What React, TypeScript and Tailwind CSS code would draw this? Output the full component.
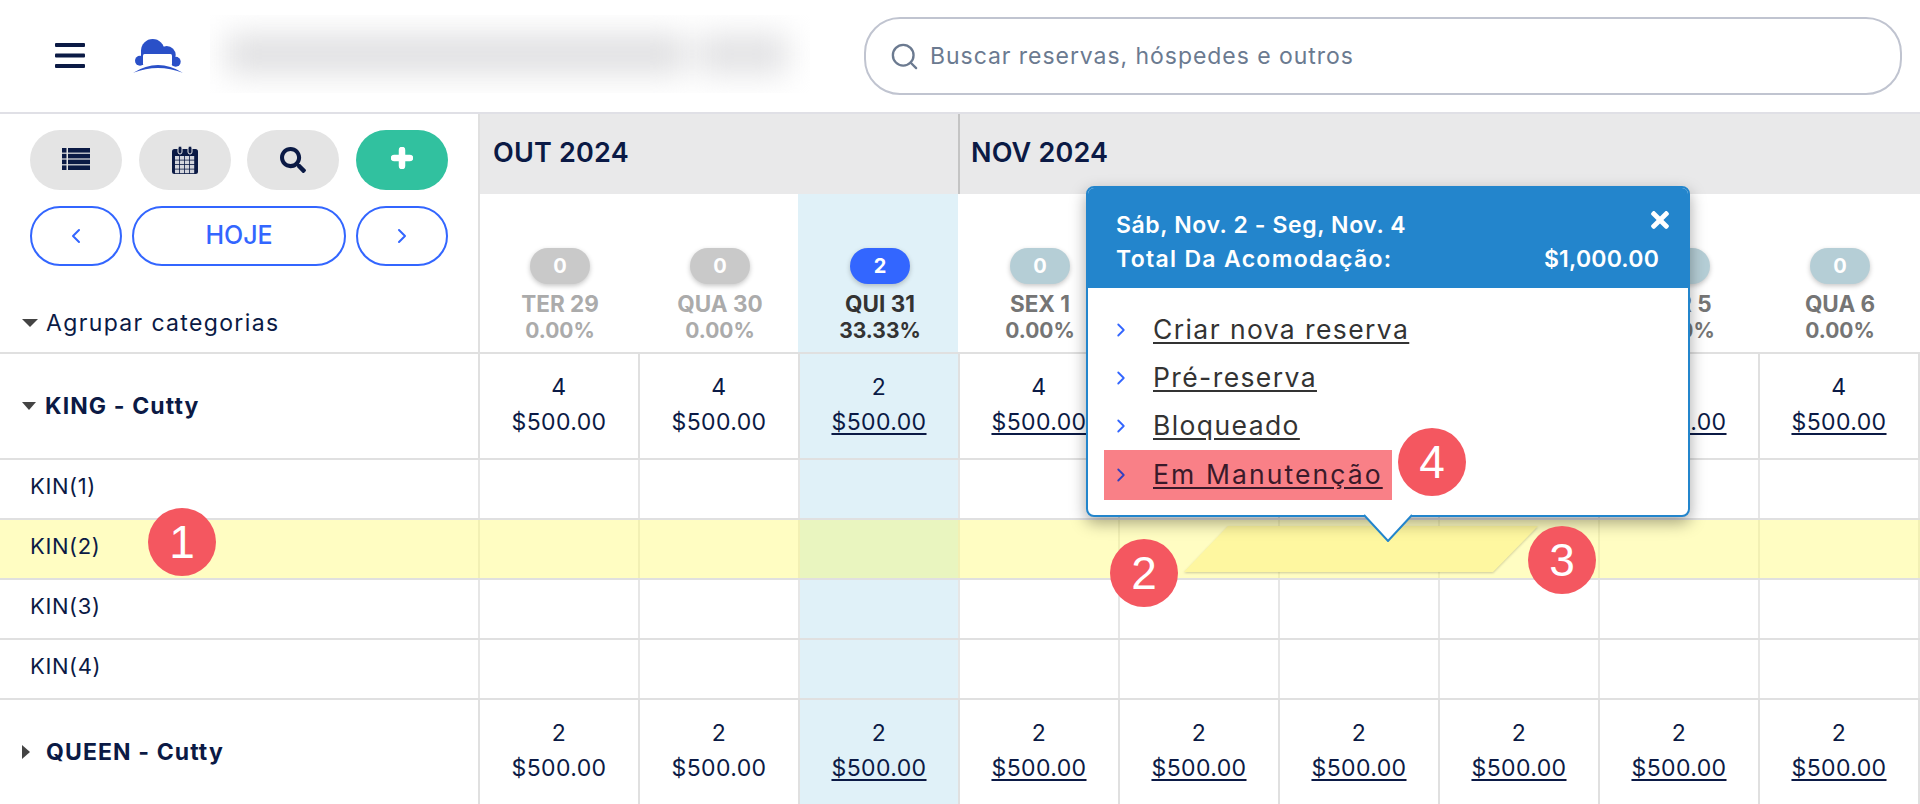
import { ChevronLeft, ChevronRight, Search } from "lucide-react";
import { FaSearch, FaTimes } from "react-icons/fa";

const days = [
  { label: "TER 29", pct: "0.00%", count: 0, kind: "past" },
  { label: "QUA 30", pct: "0.00%", count: 0, kind: "past" },
  { label: "QUI 31", pct: "33.33%", count: 2, kind: "today" },
  { label: "SEX 1", pct: "0.00%", count: 0, kind: "next" },
  { label: "SAB 2", pct: "0.00%", count: 0, kind: "hidden" },
  { label: "DOM 3", pct: "0.00%", count: 0, kind: "hidden" },
  { label: "SEG 4", pct: "0.00%", count: 0, kind: "hidden" },
  { label: "TER 5", pct: "0.00%", count: 0, kind: "next" },
  { label: "QUA 6", pct: "0.00%", count: 0, kind: "next" },
];

const kingCounts = [4, 4, 2, 4, 4, 4, 4, 4, 4];
const queenCounts = [2, 2, 2, 2, 2, 2, 2, 2, 2];
const menuItems = ["Criar nova reserva", "Pré-reserva", "Bloqueado"];

function Logo() {
  return (
    <svg width="50" height="35" viewBox="0 0 50 35" className="block">
      <g fill="#2a50c8">
        <circle cx="19.7" cy="11.7" r="11.7" />
        <circle cx="33.7" cy="16" r="9" />
        <circle cx="7" cy="21.7" r="5" />
        <circle cx="42.7" cy="22.7" r="5" />
        <rect x="8" y="11" width="32" height="12" />
      </g>
      <rect x="10" y="15" width="29" height="11" rx="1.5" fill="#ffffff" />
      <path d="M0.3 33.7 Q25 18.3 49.7 33.7 Q25 24.3 0.3 33.7 Z" fill="#2a50c8" />
    </svg>
  );
}

function ListIcon() {
  const rows = [0, 5.8, 11.6, 17.4];
  return (
    <svg width="28" height="22" viewBox="0 0 28 22" className="mb-[3px]">
      {rows.map((y) => (
        <g key={y} fill="#0b1a45">
          <rect x="0" y={y} width="4.5" height="4.6" />
          <rect x="6" y={y} width="22" height="4.6" />
        </g>
      ))}
    </svg>
  );
}

function CalendarIcon() {
  const cols = [3, 8, 13, 18];
  const rows = [10, 14.5, 19, 23.5];
  return (
    <svg width="26" height="28" viewBox="0 0 26 28">
      <rect x="0" y="3" width="26" height="25" rx="2.5" fill="#0b1a45" />
      <rect x="6" y="0" width="4" height="8" rx="2" fill="#0b1a45" stroke="#e4e4e4" strokeWidth="1" />
      <rect x="16" y="0" width="4" height="8" rx="2" fill="#0b1a45" stroke="#e4e4e4" strokeWidth="1" />
      {rows.map((y) =>
        cols.map((x) => (
          <rect key={`${x}-${y}`} x={x} y={y} width="4.2" height="3.7" fill="#d3d5dc" />
        )),
      )}
    </svg>
  );
}

function PlusIcon() {
  return (
    <svg width="22" height="22" viewBox="0 0 22 22" className="mb-[4px]">
      <path d="M11 3 V19 M3 11 H19" stroke="#ffffff" strokeWidth="6.5" strokeLinecap="round" />
    </svg>
  );
}

function Bubble({ n, className }: { n: number; className: string }) {
  return (
    <div
      className={`absolute flex h-[68px] w-[68px] items-center justify-center rounded-full bg-[#f45760] font-['Liberation_Sans',sans-serif] text-[46px] text-white ${className}`}
    >
      {n}
    </div>
  );
}

function CategoryRow({ name, counts, open }: { name: string; counts: number[]; open: boolean }) {
  return (
    <div className="flex h-[106px] border-b-2 border-[#e0e0e0]">
      <div className="flex w-[478px] shrink-0 items-center gap-[9px] pl-[22px]">
        {open ? (
          <span className="h-0 w-0 border-x-[7.5px] border-t-[8px] border-x-transparent border-t-[#444]" />
        ) : (
          <span className="mr-[7px] h-0 w-0 border-y-[7.5px] border-l-[8px] border-y-transparent border-l-[#444]" />
        )}
        <span className="text-[23px] font-bold tracking-[1.1px] text-[#0b1a45]">{name}</span>
      </div>
      {counts.map((c, i) => (
        <div
          key={i}
          className={`flex w-[160px] shrink-0 flex-col items-center justify-center border-l-2 border-[#e0e0e0] pb-[2px] text-[23px] leading-[35px] tracking-[0.4px] text-[#0b1a45] ${
            i === 2 ? "bg-[#e0f1f8]" : ""
          } ${i === counts.length - 1 ? "w-[162px] border-r-2" : ""}`}
        >
          {/* células 4 a 6 ficam atrás do popover na linha KING */}
          {!(open && i >= 4 && i <= 6) && (
            <>
              <span>{c}</span>
              <span className={i >= 2 ? "underline underline-offset-[3px]" : ""}>$500.00</span>
            </>
          )}
        </div>
      ))}
    </div>
  );
}

function RoomRow({ name, highlight }: { name: string; highlight?: boolean }) {
  return (
    <div className={`flex h-[60px] border-b-2 border-[#e0e0e0] ${highlight ? "bg-[#fffdc2]" : ""}`}>
      <div className="flex w-[478px] shrink-0 items-center pb-[6px] pl-[30px] text-[22px] tracking-[0.6px] text-[#0b1a45]">
        {name}
      </div>
      {days.map((d, i) => (
        <div
          key={d.label}
          className={`w-[160px] shrink-0 border-l-2 ${
            highlight ? "border-[#f2f0b4]" : "border-[#e6e6e6]"
          } ${i === 2 ? (highlight ? "bg-[#e9f5bf]" : "bg-[#e0f1f8]") : ""} ${
            i === days.length - 1 ? "w-[162px] border-r-2" : ""
          }`}
        />
      ))}
    </div>
  );
}

const textColor: Record<string, string> = {
  past: "text-[#ababab]",
  today: "text-[#333333]",
  next: "text-[#757575]",
};

const badgeColor: Record<string, string> = {
  past: "bg-[#c9c9c9]",
  today: "bg-[#3366ff]",
  next: "bg-[#b5ced6]",
};

export default function App() {
  return (
    <div className="relative h-[804px] w-[1920px] overflow-hidden bg-white font-['Inter',sans-serif] text-[#0b1a45]">
      {/* Topo */}
      <header className="flex h-[114px] items-center border-b-2 border-[#e0e0e6]">
        <svg width="30" height="25" viewBox="0 0 30 25" className="mb-[1px] ml-[55px]">
          <rect width="30" height="4" rx="1" fill="#0b1a45" />
          <rect y="10.5" width="30" height="4" rx="1" fill="#0b1a45" />
          <rect y="21" width="30" height="4" rx="1" fill="#0b1a45" />
        </svg>
        <div className="ml-[48px] mt-[1px]">
          <Logo />
        </div>
        {/* nome da propriedade borrado */}
        <div className="ml-[27px] mb-[4px] h-[78px] w-[600px] overflow-hidden">
          <div className="flex h-full items-center gap-[12px] pl-[16px] blur-[15px]">
            <div className="h-[40px] w-[460px] bg-[#e0e0e2]" />
            <div className="h-[40px] w-[90px] bg-[#e2e2e4]" />
          </div>
        </div>
        <div className="ml-[54px] flex h-[78px] w-[1038px] items-center gap-[10px] rounded-[36px] border-2 border-[#c0c4d0] pl-[23px] text-[23px] tracking-[0.95px] text-[#6b7a90]">
          <Search size={31} strokeWidth={1.8} className="text-[#6b7a90]" />
          <span>Buscar reservas, hóspedes e outros</span>
        </div>
      </header>

      {/* Cabeçalho do calendário */}
      <div className="flex h-[240px] border-b-2 border-[#e0e0e0]">
        <div className="flex w-[478px] shrink-0 flex-col pt-[16px]">
          <div className="ml-[30px] flex w-[418px] justify-between">
            <button className="flex h-[60px] w-[92px] items-center justify-center rounded-[30px] bg-[#e4e4e4]">
              <ListIcon />
            </button>
            <button className="flex h-[60px] w-[92px] items-center justify-center rounded-[30px] bg-[#e4e4e4]">
              <CalendarIcon />
            </button>
            <button className="flex h-[60px] w-[92px] items-center justify-center rounded-[30px] bg-[#e4e4e4]">
              <FaSearch size={26} className="text-[#0b1a45]" />
            </button>
            <button className="flex h-[60px] w-[92px] items-center justify-center rounded-[30px] bg-[#31c19f]">
              <PlusIcon />
            </button>
          </div>
          <div className="ml-[30px] mt-[16px] flex w-[418px] gap-[10px] text-[#3366ff]">
            <button className="flex h-[60px] w-[92px] items-center justify-center rounded-[30px] border-2 border-[#3366ff]">
              <ChevronLeft size={24} strokeWidth={2} />
            </button>
            <button className="flex h-[60px] flex-1 items-center justify-center rounded-[30px] border-2 border-[#3366ff] text-[25px] font-medium">
              HOJE
            </button>
            <button className="flex h-[60px] w-[92px] items-center justify-center rounded-[30px] border-2 border-[#3366ff]">
              <ChevronRight size={24} strokeWidth={2} />
            </button>
          </div>
          <div className="mt-[40px] flex items-center gap-[8px] pl-[22px]">
            <span className="h-0 w-0 border-x-[8px] border-t-[8px] border-x-transparent border-t-[#444]" />
            <span className="text-[23px] tracking-[1.35px]">Agrupar categorias</span>
          </div>
        </div>

        <div className="flex flex-1 flex-col">
          <div className="flex h-[80px] border-l-2 border-[#e0e0e0] bg-[#e9e9ea] text-[27px] font-semibold tracking-[0.2px]">
            <div className="flex w-[480px] items-center border-r-2 border-[#c4c4c4] pb-[1px] pl-[13px]">OUT 2024</div>
            <div className="flex flex-1 items-center pb-[1px] pl-[11px]">NOV 2024</div>
          </div>
          <div className="flex flex-1">
            {days.map((d, i) => (
              <div
                key={d.label}
                className={`flex w-[160px] shrink-0 flex-col items-center border-l-2 pl-[2px] pt-[54px] ${
                  i === 0 ? "border-[#e0e0e0]" : "border-transparent"
                } ${d.kind === "today" ? "bg-[#e0f1f8]" : ""}`}
              >
                {d.kind !== "hidden" && (
                  <>
                    <span
                      className={`flex h-[36px] w-[60px] items-center justify-center rounded-[18px] text-[20px] font-bold text-white shadow-[0_2px_5px_rgba(0,0,0,0.22)] ${badgeColor[d.kind]}`}
                    >
                      {d.count}
                    </span>
                    <span className={`mt-[6px] text-[22.5px] font-bold leading-[28px] ${textColor[d.kind]}`}>
                      {d.label}
                    </span>
                    <span className={`mt-[1px] text-[21px] font-bold leading-[24px] ${textColor[d.kind]}`}>
                      {d.pct}
                    </span>
                  </>
                )}
              </div>
            ))}
          </div>
        </div>
      </div>

      {/* Linhas */}
      <CategoryRow name="KING - Cutty" counts={kingCounts} open />
      <RoomRow name="KIN(1)" />
      <RoomRow name="KIN(2)" highlight />
      <RoomRow name="KIN(3)" />
      <RoomRow name="KIN(4)" />
      <CategoryRow name="QUEEN - Cutty" counts={queenCounts} open={false} />

      {/* Seleção em forma de paralelogramo */}
      <svg
        className="absolute left-[1180px] top-[522px] drop-shadow-[0_1px_1px_rgba(0,0,0,0.2)]"
        width="362"
        height="54"
        viewBox="0 0 362 54"
      >
        <polygon points="48,4 358,4 313,50 4,50" fill="#fef7a0" />
      </svg>

      {/* Popover */}
      <div className="absolute left-[1086px] top-[186px] h-[331px] w-[604px] overflow-hidden rounded-[8px] border-2 border-[#2385cc] bg-white shadow-[0_6px_16px_rgba(0,0,0,0.35)]">
        <div className="relative h-[100px] bg-[#2385cc] pl-[28px] pr-[29px] pt-[20px] text-[23px] font-semibold text-white">
          <div className="leading-[34px] tracking-[0.6px]">Sáb, Nov. 2 - Seg, Nov. 4</div>
          <div className="flex justify-between leading-[34px]">
            <span className="tracking-[1.3px]">Total Da Acomodação:</span>
            <span className="tracking-[0.2px]">$1,000.00</span>
          </div>
          <FaTimes size={26} className="absolute right-[15px] top-[19px]" />
        </div>
        <div className="flex flex-col pl-[16px] pt-[18px]">
          {menuItems.map((item) => (
            <div key={item} className="flex h-[48px] items-center whitespace-nowrap text-[26.5px] tracking-[1.4px] text-[#333333]">
              <ChevronRight size={22} strokeWidth={2} className="ml-[6px] mr-[21px] text-[#3366ff]" />
              <span className="underline underline-offset-[3px]">{item}</span>
            </div>
          ))}
          <div className="flex h-[50px] w-[288px] items-center whitespace-nowrap bg-[#f98087] text-[26.5px] tracking-[2.1px] text-[#3a1a2a]">
            <ChevronRight size={22} strokeWidth={2} className="ml-[6px] mr-[21px] text-[#3340c0]" />
            <span className="underline underline-offset-[3px]">Em Manutenção</span>
          </div>
        </div>
      </div>

      {/* Seta do popover */}
      <svg className="absolute left-[1362px] top-[514px]" width="52" height="28" viewBox="0 0 52 28">
        <polygon points="2,1 50,1 26,27" fill="#ffffff" />
        <polyline points="2,1 26,27 50,1" fill="none" stroke="#2385cc" strokeWidth="2" />
      </svg>

      <Bubble n={1} className="left-[148px] top-[508px]" />
      <Bubble n={2} className="left-[1110px] top-[539px]" />
      <Bubble n={3} className="left-[1528px] top-[526px]" />
      <Bubble n={4} className="left-[1398px] top-[428px]" />
    </div>
  );
}
